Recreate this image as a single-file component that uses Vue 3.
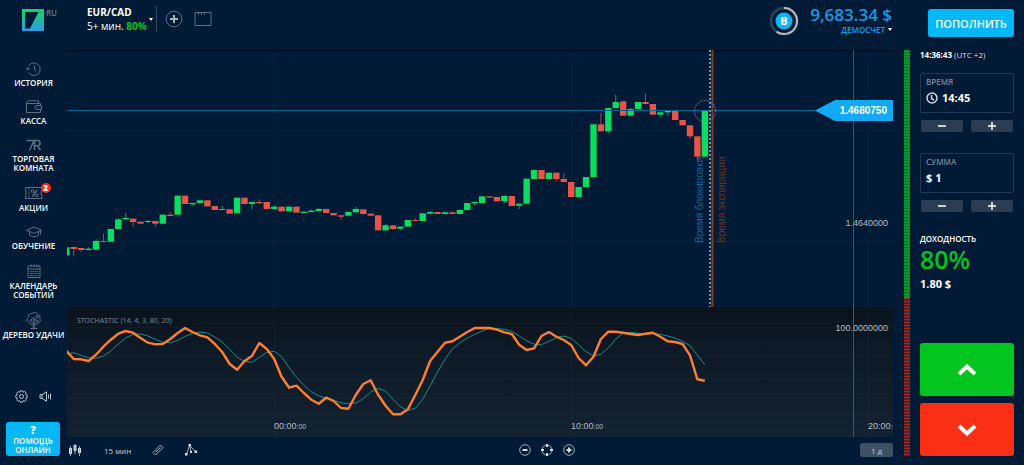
<script setup>
const menu = [
  { icon: 'history', lines: ['ИСТОРИЯ'] },
  { icon: 'wallet', lines: ['КАССА'] },
  { icon: 'room', lines: ['ТОРГОВАЯ', 'КОМНАТА'] },
  { icon: 'promo', lines: ['АКЦИИ'], badge: '2', tall: true },
  { icon: 'school', lines: ['ОБУЧЕНИЕ'] },
  { icon: 'calendar', lines: ['КАЛЕНДАРЬ', 'СОБЫТИЙ'], tall: true },
  { icon: 'tree', lines: ['ДЕРЕВО УДАЧИ'], tall: true }
]

// Candles: [direction, body top, body bottom, wick top, wick bottom], three units per chart pixel
const raw = [
  ['u', 592, 616, 561, 616], ['d', 591, 597, 591, 619], ['d', 594, 600, 594, 606], ['u', 596, 600, 592, 600],
  ['u', 573, 599, 568, 599], ['d', 573, 576, 551, 576], ['u', 537, 575, 537, 575], ['u', 508, 537, 504, 537],
  ['u', 504, 508, 489, 508], ['d', 506, 516, 506, 530], ['d', 515, 521, 515, 521], ['u', 513, 516, 510, 519],
  ['d', 513, 521, 513, 530], ['u', 494, 521, 494, 521], ['d', 494, 498, 486, 498], ['u', 437, 494, 437, 494],
  ['d', 437, 462, 437, 462], ['u', 459, 463, 459, 465], ['u', 451, 459, 451, 461], ['d', 451, 469, 451, 469],
  ['d', 468, 480, 468, 480], ['u', 477, 480, 468, 480], ['d', 478, 491, 478, 491], ['u', 443, 490, 443, 490],
  ['d', 443, 462, 443, 462], ['u', 456, 462, 456, 478], ['d', 456, 460, 448, 460], ['d', 456, 477, 456, 477],
  ['u', 470, 477, 467, 479], ['d', 470, 484, 470, 484], ['u', 470, 484, 470, 484], ['d', 470, 488, 470, 488],
  ['u', 485, 489, 485, 491], ['u', 482, 486, 478, 486], ['u', 477, 483, 474, 483], ['d', 477, 489, 477, 489],
  ['d', 489, 496, 489, 496], ['d', 496, 500, 496, 509], ['u', 486, 497, 486, 497], ['u', 477, 487, 471, 487],
  ['d', 478, 492, 478, 494], ['d', 491, 497, 491, 497], ['d', 496, 541, 496, 541], ['u', 526, 541, 522, 541],
  ['d', 526, 537, 526, 540], ['u', 530, 536, 530, 540], ['u', 510, 530, 510, 530], ['d', 510, 513, 504, 513],
  ['u', 490, 513, 490, 513], ['u', 486, 491, 483, 491], ['d', 486, 492, 486, 492], ['u', 487, 492, 484, 492],
  ['d', 487, 492, 484, 492], ['u', 480, 492, 477, 492], ['u', 459, 480, 459, 480], ['u', 456, 460, 456, 467],
  ['u', 439, 459, 439, 459], ['d', 439, 443, 439, 443], ['d', 441, 454, 441, 454], ['u', 438, 454, 436, 458],
  ['d', 438, 468, 438, 468], ['u', 461, 467, 461, 477], ['u', 386, 461, 386, 463], ['u', 360, 387, 360, 387],
  ['d', 360, 387, 360, 387], ['u', 368, 387, 368, 387], ['d', 368, 387, 368, 394], ['d', 387, 396, 369, 396],
  ['d', 396, 441, 396, 441], ['u', 411, 441, 411, 441], ['u', 381, 411, 381, 411], ['u', 223, 381, 223, 381],
  ['d', 223, 244, 189, 244], ['u', 174, 244, 174, 248], ['u', 156, 174, 135, 174], ['d', 154, 197, 154, 197],
  ['u', 177, 197, 174, 197], ['u', 156, 177, 156, 177], ['d', 156, 162, 130, 162], ['d', 162, 194, 162, 194],
  ['u', 187, 194, 187, 199], ['u', 181, 187, 181, 197], ['d', 181, 210, 181, 210], ['d', 210, 226, 210, 226],
  ['d', 226, 259, 226, 266], ['d', 259, 320, 259, 335], ['u', 182, 320, 182, 320]
]
const UNIT = 3
const STEP = 7.425
const xAt = k => k * STEP - 0.7
const candles = raw.map(([dir, top, bottom, high, low], k) => ({
  dir, x: xAt(k), y: top / UNIT, h: (bottom - top) / UNIT, high: high / UNIT, low: low / UNIT
}))

// Stochastic oscillator, measured down from the top of its scale
const fast = [122, 147, 148, 153, 134, 110, 89, 71, 63, 68, 84, 98, 103, 102, 87, 69, 54, 66, 76, 82, 102, 126, 162, 179, 153, 138, 99, 117, 147, 200, 233, 227, 249, 269, 281, 263, 273, 294, 296, 254, 222, 211, 254, 287, 313, 313, 298, 255, 210, 153, 125, 98, 94, 80, 66, 54, 54, 54, 59, 67, 72, 104, 120, 115, 78, 66, 80, 90, 105, 144, 166, 140, 87, 65, 65, 68, 72, 75, 71, 68, 80, 94, 96, 102, 136, 208, 212]
const slow = [132, 128, 136, 143, 145, 138, 123, 102, 84, 73, 72, 78, 88, 97, 98, 91, 79, 70, 66, 69, 81, 96, 118, 142, 154, 157, 142, 127, 124, 140, 173, 202, 226, 245, 257, 265, 271, 278, 281, 279, 266, 246, 235, 243, 268, 291, 301, 295, 268, 228, 186, 147, 117, 98, 84, 73, 63, 55, 56, 58, 64, 78, 92, 103, 104, 94, 83, 78, 85, 104, 125, 138, 133, 113, 87, 70, 67, 70, 72, 71, 73, 78, 84, 94, 107, 136, 164]
const line = values => values.map((v, k) => `${xAt(k).toFixed(1)},${(v / UNIT + 260).toFixed(1)}`).join(' ')
</script>

<template>
  <div class="app">
    <aside class="side">
      <div class="brand">
        <svg width="22" height="22" viewBox="0 0 22 22" aria-hidden="true">
          <defs>
            <linearGradient id="logo" x1="0" y1="0" x2="0" y2="1">
              <stop offset="0" stop-color="#12d65c" />
              <stop offset="1" stop-color="#2f9be8" />
            </linearGradient>
          </defs>
          <path fill="url(#logo)" fill-rule="evenodd" d="M0 0H22V22H0ZM3 3V19.500H8L16.500 3Z" />
        </svg>
        <span class="lang">RU</span>
      </div>

      <nav class="menu">
        <a v-for="m in menu" :key="m.icon" href="#" class="item">
          <span class="pic" :class="{ tall: m.tall }">
            <svg v-if="m.icon === 'history'" width="16" height="16" viewBox="0 0 16 16">
              <path d="M2.500 5A6.300 6.300 0 1 1 2.500 11.500M.5 8.500 2 6.500 4 8.500M2 6.500V9.500M8.500 4.500V8.500L10 10" />
            </svg>
            <svg v-else-if="m.icon === 'wallet'" width="16" height="14" viewBox="0 0 16 14">
              <path d="M.5 2.500V12.500H14.500V9.500M.5 2.500C.5 1 1.500.8 2.500.8H12.500V3.500M.5 3.500H14.500V5.500M15.500 5.500H11A2 2 0 0 0 11 9.500H15.500ZM11.500 7.500H12.200" />
            </svg>
            <svg v-else-if="m.icon === 'room'" width="16" height="12" viewBox="0 0 16 12">
              <path class="bold" d="M.5 1.500H8L3.500 11.500M8.500 11V1.500H11.500A2.500 2.500 0 0 1 11.500 6.700H8.500M11.500 6.700 14.500 11.500" />
            </svg>
            <svg v-else-if="m.icon === 'promo'" width="18" height="12" viewBox="0 0 18 12">
              <path d="M.5.5H17V3.500L15.500 5 17 6 15.500 7.500 17 8.500V11.500H.5V8.500L1.500 7.500.5 6 1.500 5 .5 3.500Z" />
              <path stroke-dasharray="1 1" d="M4 1V11" />
              <path class="bold" d="M12 3 7.500 9.500" />
              <circle cx="7.500" cy="4" r="1.400" /><circle cx="12" cy="8.300" r="1.400" />
            </svg>
            <svg v-else-if="m.icon === 'school'" width="16" height="12" viewBox="0 0 16 12">
              <path d="M.5 4.200 8 1 15.500 4.200 8 7.400ZM3.500 6V9Q8 12.500 12.500 9V6M14.500 4.500V8.500" />
            </svg>
            <svg v-else-if="m.icon === 'calendar'" width="14" height="14" viewBox="0 0 14 14">
              <path d="M1 2H13V13.500H1ZM1 5H13M4 .3V3M7 .3V3M10 .3V3" />
              <path stroke-dasharray="1.500 1" d="M3 7.500H11.500M3 9.500H11.500M3 11.500H11.500" />
            </svg>
            <svg v-else width="16" height="17" viewBox="0 0 16 17">
              <path d="M7.200 16V10M8.800 16V10M4.500 16.500H11.500M7 12Q4 12.500 2.500 10.500A3 3 0 0 1 2.200 5.500 3.500 3.500 0 0 1 6 1.500 4 4 0 0 1 12 2.500 3 3 0 0 1 13.800 6.500 3 3 0 0 1 12.500 11Q10.500 12.500 9 12M8 10V5M8 8.500 10.500 6.500M8 7.500 5.500 5.500" />
              <circle cx="5" cy="8.500" r="1" /><circle cx="11" cy="4.500" r="1" /><circle cx="11" cy="9" r="1" />
            </svg>
            <b v-if="m.badge" class="badge">{{ m.badge }}</b>
          </span>
          <span v-for="l in m.lines" :key="l" class="label">{{ l }}</span>
        </a>
      </nav>

      <div class="tools">
        <button type="button" aria-label="Настройки">
          <svg width="13" height="13" viewBox="0 0 13 13">
            <path d="M5.500.8H7.500L8 2.200 9.700 1.500 11.300 3.100 10.600 4.800 12.200 5.500V7.500L10.700 8.100 11.400 9.800 9.900 11.400 8.200 10.700 7.500 12.200H5.500L4.900 10.700 3.200 11.400 1.700 9.900 2.400 8.200.8 7.500V5.500L2.300 4.900 1.600 3.200 3.200 1.600 4.900 2.300Z" />
            <circle cx="6.500" cy="6.500" r="2" />
          </svg>
        </button>
        <button type="button" aria-label="Звук">
          <svg width="13" height="11" viewBox="0 0 13 11">
            <path d="M1 3.700H3L7.500.8V10.200L3 7.300H1ZM3 3.700V7.300M9.500 3.500V7.500M11.500 2.500V8.500" />
          </svg>
        </button>
      </div>
      <button type="button" class="help"><b>?</b><span>ПОМОЩЬ ОНЛАЙН</span></button>
    </aside>

    <main class="center">
      <header class="top">
        <button type="button" class="pair">
          <span class="names">
            <strong>EUR/CAD</strong>
            <span>5+ мин. <em>80%</em></span>
          </span>
          <i class="caret"></i>
        </button>
        <button type="button" class="add" aria-label="Добавить">
          <svg width="18" height="18" viewBox="0 0 18 18">
            <circle cx="9" cy="9" r="7.800" /><path class="plus" d="M9 5V13M5 9H13" />
          </svg>
        </button>
        <button type="button" aria-label="Окна">
          <svg width="18" height="16" viewBox="0 0 18 16">
            <path d="M1 1.500H17V14.500H1ZM4.500 2V4M7.500 2V4M10.500 2V4" />
          </svg>
        </button>
        <div class="account">
          <svg width="30" height="30" viewBox="0 0 30 30">
            <circle class="ring" cx="15" cy="15" r="13" />
            <path class="arc" d="M15 2A13 13 0 1 1 7.500 25.600" />
            <circle class="disc" cx="15" cy="15" r="8.500" />
            <text x="15" y="19" text-anchor="middle">B</text>
          </svg>
          <div class="money">
            <strong>9,683.34 $</strong>
            <a href="#">ДЕМОСЧЕТ<i class="caret"></i></a>
          </div>
        </div>
      </header>

      <svg class="chart" viewBox="0 0 826 387" role="img" aria-label="EUR/CAD">
        <defs>
          <linearGradient id="pane" x1="0" y1="0" x2="0" y2="1">
            <stop offset="0" stop-color="#0a131c" />
            <stop offset=".3" stop-color="#0d1926" />
            <stop offset="1" stop-color="#132231" />
          </linearGradient>
        </defs>
        <rect class="pane" y="257" width="826" height="130" fill="url(#pane)" />
        <path class="edge" d="M0 .5H826" />
        <path class="grid" d="M207.500 0V387M504.500 0V387M801.500 0V387M0 80.500H826M0 191.500H826M0 277.500H826M0 306.500H826M0 328.500H826M0 347.500H826M0 364.500H826" />
        <g v-for="(c, k) in candles" :key="k" :class="c.dir">
          <path class="wick" :d="`M${c.x} ${c.high}V${c.low}`" />
          <rect :x="c.x - 3.200" :y="c.y" width="6.400" :height="c.h" />
        </g>
        <polyline class="slow" :points="line(slow)" />
        <polyline class="fast" :points="line(fast)" />
        <path class="price" d="M0 60.500H750" />
        <path class="lock" d="M643 0V257" />
        <path class="expiry" d="M645.500 0V257" />
        <circle class="target" cx="638" cy="61" r="10.500" />
        <text class="vert blue" transform="translate(636 193) rotate(-90)">Время блокировки</text>
        <text class="vert rust" transform="translate(658 193) rotate(-90)">Время экспирации</text>
        <path class="axis" d="M786.500 0V387" />
        <path class="tag" d="M748 60.500 768 50H826V71H768Z" />
        <text class="now" x="820" y="64" text-anchor="end">1.4680750</text>
        <text class="scale" x="821" y="176" text-anchor="end">1.4640000</text>
        <text class="scale" x="821" y="281" text-anchor="end">100.0000000</text>
        <text class="study" x="10" y="273">STOCHASTIC (14, 4, 3, 80, 20)</text>
        <text class="scale" x="207" y="379">00:00<tspan class="sec">:00</tspan></text>
        <text class="scale" x="504" y="379">10:00<tspan class="sec">:00</tspan></text>
        <text class="scale" x="801" y="379">20:00<tspan class="sec">:00</tspan></text>
      </svg>

      <footer class="bar">
        <div class="group left">
          <button type="button" aria-label="Тип графика">
            <svg width="12" height="12" viewBox="0 0 12 12">
              <path class="fill" d="M0 4H3V10H0ZM4.500 1H7.500V7H4.500ZM9 4H12V9H9Z" /><path d="M1.500 2V12M6 0V10M10.500 2V12" />
            </svg>
          </button>
          <button type="button" class="period">15 мин</button>
          <button type="button" aria-label="Линейка">
            <svg width="12" height="12" viewBox="0 0 12 12"><path d="M1 8.500 8.500 1 11 3.500 3.500 11ZM4 8 8.500 3.500" /></svg>
          </button>
          <button type="button" aria-label="Индикаторы">
            <svg width="12" height="12" viewBox="0 0 12 12">
              <path d="M1.500 10.500 4.500 1.500 10.500 7.500M4.500 1.500 6 7.500" />
              <path class="fill" d="M3.500 0H6V2.500H3.500ZM0 9H2.500V11.500H0ZM9.500 6.500H12V9H9.500ZM5 7H7V9H5Z" />
            </svg>
          </button>
        </div>
        <div class="group zoom">
          <button type="button" aria-label="Уменьшить">
            <svg width="12" height="12" viewBox="0 0 12 12"><circle cx="6" cy="6" r="5.300" /><path class="thick" d="M3.500 6H8.500" /></svg>
          </button>
          <button type="button" aria-label="По центру">
            <svg width="12" height="12" viewBox="0 0 12 12"><circle cx="6" cy="6" r="5" /><path class="thick" d="M6 0V3M6 9V12M0 6H3M9 6H12" /></svg>
          </button>
          <button type="button" aria-label="Увеличить">
            <svg width="12" height="12" viewBox="0 0 12 12"><circle cx="6" cy="6" r="5.300" /><path class="thick" d="M3.500 6H8.500M6 3.500V8.500" /></svg>
          </button>
        </div>
        <div class="group right"><button type="button" class="range">1 д</button></div>
      </footer>
    </main>

    <aside class="trade">
      <div class="pay"><button type="button">ПОПОЛНИТЬ</button></div>
      <div class="body">
        <div class="mood"><i class="bull"></i><i class="bear"></i></div>
        <div class="form">
          <div class="clock"><b>14:36:43</b> (UTC +2)</div>
          <label class="field">
            <span>ВРЕМЯ</span>
            <span class="value">
              <svg width="12" height="12" viewBox="0 0 12 12"><circle cx="6" cy="6" r="5" /><path d="M5.500 3V6.500L8 8" /></svg>
              <input type="text" value="14:45">
            </span>
          </label>
          <div class="steps">
            <button type="button" aria-label="Меньше"><svg width="10" height="10" viewBox="0 0 10 10"><path d="M1 5H9" /></svg></button>
            <button type="button" aria-label="Больше"><svg width="10" height="10" viewBox="0 0 10 10"><path d="M1 5H9M5 1V9" /></svg></button>
          </div>
          <label class="field second">
            <span>СУММА</span>
            <span class="value"><input type="text" value="$ 1"></span>
          </label>
          <div class="steps">
            <button type="button" aria-label="Меньше"><svg width="10" height="10" viewBox="0 0 10 10"><path d="M1 5H9" /></svg></button>
            <button type="button" aria-label="Больше"><svg width="10" height="10" viewBox="0 0 10 10"><path d="M1 5H9M5 1V9" /></svg></button>
          </div>
          <div class="yield">
            <span>ДОХОДНОСТЬ</span>
            <strong>80%</strong>
            <b>1.80 $</b>
          </div>
          <div class="deal">
            <button type="button" class="up" aria-label="Вверх"><svg width="20" height="14" viewBox="0 0 20 14"><path d="M2 11 10 3.500 18 11" /></svg></button>
            <button type="button" class="down" aria-label="Вниз"><svg width="20" height="14" viewBox="0 0 20 14"><path d="M2 3 10 10.500 18 3" /></svg></button>
          </div>
        </div>
      </div>
    </aside>
  </div>
</template>

<style>
body { margin: 0; background: #011b36; }
</style>

<style scoped>
.app {
  display: grid;
  grid-template-columns: 67px 1fr 131px;
  min-height: 100vh;
  background: #011b36;
  color: #fff;
  font-family: "Open Sans", "Noto Sans", sans-serif;
  font-size: 8px;
  line-height: 9px;
}
button { padding: 0; border: 0; background: none; color: inherit; font: inherit; display: flex; align-items: center; justify-content: center; }
a { color: inherit; text-decoration: none; }
svg { display: block; fill: none; stroke: #5d6f82; stroke-width: 1; flex: none; }
.caret { border: 2px solid transparent; border-top: 3px solid #fff; border-bottom: 0; }

.side { display: flex; flex-direction: column; align-items: center; padding-bottom: 9px; box-sizing: border-box; }
.brand { display: flex; align-self: stretch; gap: 2px; height: 51px; padding: 9px 0 0 22px; box-sizing: border-box; }
.brand svg { stroke: none; }
.lang { color: #66788a; font-weight: 600; line-height: 8px; }
.menu { display: flex; flex-direction: column; gap: 11px; padding-top: 9px; align-self: stretch; }
.item { display: flex; flex-direction: column; align-items: center; font-weight: 600; white-space: nowrap; }
.pic { position: relative; display: flex; align-items: center; height: 18px; }
.pic.tall { height: 20px; }
.bold { stroke-width: 1.500; }
.badge { position: absolute; top: 0; left: 16px; width: 10px; height: 10px; line-height: 10px; border-radius: 50%; background: #fa2f1b; text-align: center; }
.tools { display: flex; gap: 11px; margin-top: auto; margin-bottom: 19px; }
.tools svg { stroke: #b9c3cd; }
.help { flex-direction: column; width: 54px; height: 34px; margin-right: 1px; border-radius: 3px; background: #04b7f6; font-weight: 600; line-height: 9px; }
.help b { display: block; font-size: 11px; line-height: 12px; }

.center { display: flex; flex-direction: column; min-width: 0; }
.top { display: flex; align-items: flex-start; height: 50px; padding: 6px 1px 0 20px; box-sizing: border-box; }
.pair { gap: 2px; height: 26px; padding-right: 3px; border-right: 1px solid #33485e; }
.names { display: flex; flex-direction: column; text-align: left; font-size: 10px; line-height: 14px; }
.names em { color: #04c122; font-style: normal; font-weight: 700; }
.add { margin: 4px 11px 0 8px; }
.add + button { margin-top: 5px; }
.plus { stroke: #a9b4bf; stroke-width: 2; }
.account { display: flex; gap: 11px; margin-left: auto; }
.ring { stroke: #2a3f55; stroke-width: 3; }
.arc { stroke: #b5bbc1; stroke-width: 2; }
.disc { fill: #04b7f6; stroke: none; }
.account text { fill: #fff; stroke: none; font-size: 11px; font-weight: 700; }
.money { display: flex; flex-direction: column; align-items: flex-end; color: #0a9fe6; }
.money strong { font-size: 17px; line-height: 17px; font-weight: 600; }
.money a { display: flex; align-items: center; gap: 3px; line-height: 13px; font-weight: 600; }

.chart { width: 100%; height: auto; overflow: hidden; }
.chart rect { stroke: none; }
.chart text { stroke: none; font-family: "Liberation Sans", sans-serif; font-size: 9px; }
.edge { stroke: #000c1b; stroke-width: 2; }
.grid { stroke: #7fa0c0; stroke-opacity: .05; }
.u rect { fill: #0bdc62; }
.d rect { fill: #e8544a; }
.u .wick { stroke: #0ba552; }
.d .wick { stroke: #a94442; }
.slow { stroke: #168f88; }
.fast { stroke: #ff7f2e; stroke-width: 2.400; stroke-linejoin: round; }
.price { stroke: #03669c; }
.lock { stroke: #3c9fe0; stroke-width: 2; stroke-dasharray: 2 2; }
.expiry { stroke: #8c3a12; stroke-width: 2; }
.target { stroke: #8e9dab; stroke-dasharray: 1 1; }
.chart .vert { font-size: 10px; }
.chart .blue { fill: #17639c; }
.chart .rust { fill: #6b341e; }
.axis { stroke: #3d536a; }
.tag { fill: #10aaf8; stroke: none; }
.chart .now { fill: #fff; font-size: 10px; font-weight: 700; }
.chart .scale { fill: #b3bcc5; }
.chart .sec { font-size: 7px; }
.chart .study { fill: #7d868f; font-family: "Noto Sans", sans-serif; font-size: 7px; }

.bar { display: grid; grid-template-columns: 1fr auto 1fr; align-items: center; flex: 1; min-height: 28px; padding-bottom: 2px; box-sizing: border-box; }
.group { display: flex; align-items: center; }
.bar svg { stroke: #a3aeb9; }
.fill { fill: #d4dade; stroke: none; }
.thick { stroke: #d4dade; stroke-width: 2; }
.left { gap: 23px; padding-left: 2px; }
.left button:nth-child(3) { margin: 0 -2px; }
.period { color: #c3cbd2; }
.zoom { gap: 10px; margin-left: 134px; }
.right { justify-content: flex-end; }
.range { width: 33px; height: 14px; border-radius: 2px; background: #3d5064; color: #c9d0d6; }

.trade { display: flex; flex-direction: column; padding: 0 10px 9px 11px; }
.pay { display: flex; justify-content: flex-end; height: 50px; padding-top: 9px; box-sizing: border-box; }
.pay button { width: 86px; height: 28px; border-radius: 3px; background: #04b7f6; font-size: 11px; font-weight: 600; }
.body { display: flex; flex: 1; gap: 10px; }
.mood { display: flex; flex-direction: column; width: 6px; }
.bull { flex: 248; background: repeating-linear-gradient(#069726 0 2px, #077428 2px 3px); }
.bear { flex: 158; background: repeating-linear-gradient(#b12720 0 1px, #56202b 1px 3px); }
.form { display: flex; flex-direction: column; flex: 1; min-width: 0; }
.clock { height: 23px; white-space: nowrap; color: #d5dbe0; }
.clock b { color: #fff; }
.field { display: flex; flex-direction: column; justify-content: space-between; height: 40px; padding: 3px 5px 7px; border: 1px solid #23394f; border-radius: 2px; box-sizing: border-box; color: #77879a; font-weight: 600; }
.value { display: flex; align-items: center; gap: 4px; }
.value svg { stroke: #d0d6dc; stroke-width: 1.500; }
.value input { width: 100%; min-width: 0; height: 14px; padding: 0; border: 0; background: none; color: #fff; font: 700 11px/14px "Open Sans", "Noto Sans", sans-serif; }
.steps { display: flex; gap: 8px; padding: 7px 1px 0; }
.steps button { flex: 1; height: 12px; border-radius: 2px; background: #2a3d53; }
.steps svg { stroke: #fff; stroke-width: 1.500; }
.second { margin-top: 21px; }
.yield { display: flex; flex-direction: column; margin-top: 22px; font-weight: 600; }
.yield strong { font-size: 25px; line-height: 32px; font-weight: 600; color: #04c122; }
.yield b { font-size: 11px; line-height: 18px; font-weight: 700; }
.deal { display: flex; flex-direction: column; gap: 7px; margin-top: auto; }
.deal button { height: 53px; border-radius: 3px; }
.deal svg { stroke: #fff; stroke-width: 4; }
.up { background: #04c41f; }
.down { background: #fa2f16; }
</style>
